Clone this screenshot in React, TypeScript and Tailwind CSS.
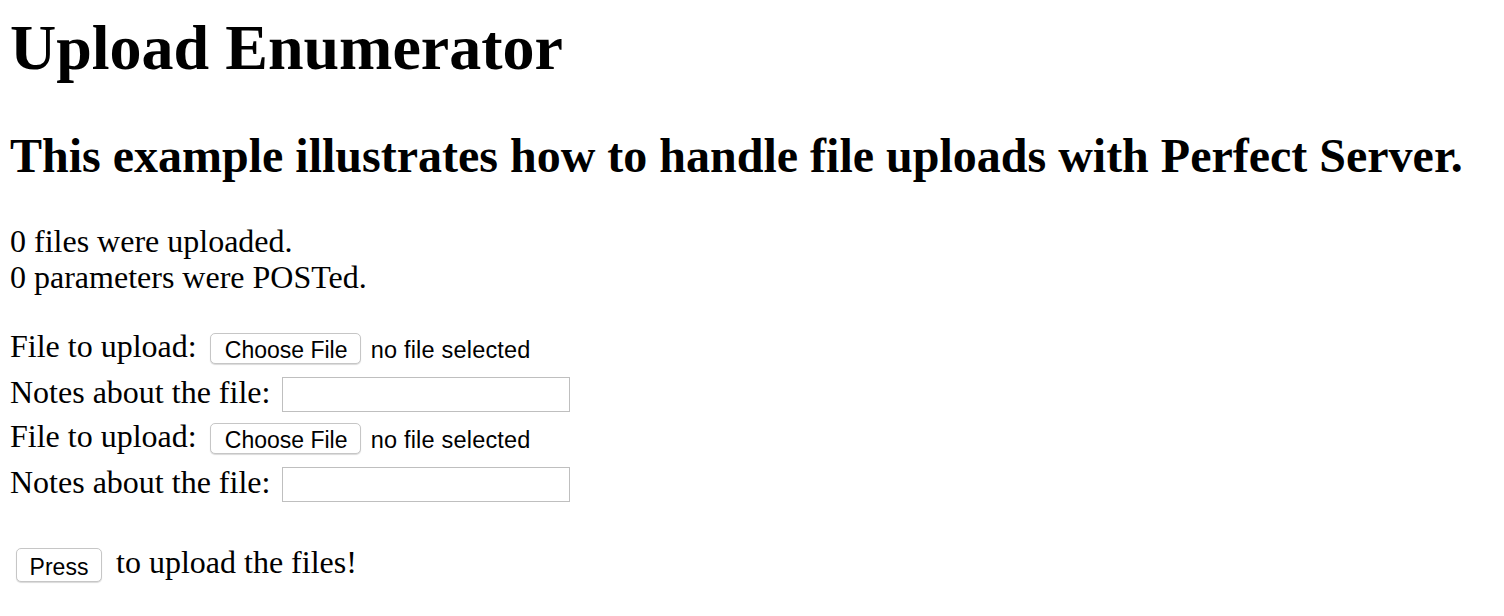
const FileRow = () => (
  <div className="flex items-start h-[46px]">
    <span className="leading-[36px]">File to upload:</span>
    <div className="flex items-center mt-[5px] ml-[13px] font-['Liberation_Sans','Helvetica',sans-serif]">
      <button
        type="button"
        className="flex items-center justify-center w-[151px] h-[31px] pt-[3px] pl-[2px] leading-[28px] text-[23px] rounded-[5px] border border-[#c6c6c6] bg-white shadow-[0_1px_1px_rgba(0,0,0,0.15)] text-black"
      >
        Choose File
      </button>
      <span className="ml-[10px] pt-[3px] leading-[28px] text-[23.5px] tracking-[0.2px]">no file selected</span>
    </div>
  </div>
);

const NotesRow = ({ last }: { last?: boolean }) => (
  <div className={last ? "flex items-start h-[80px]" : "flex items-start h-[44px]"}>
    <span className="leading-[36px]">Notes about the file:</span>
    <input
      type="text"
      className="mt-[3px] ml-[12px] w-[288px] h-[35px] border border-[#bfbfbf] bg-white outline-none"
    />
  </div>
);

export default function App() {
  return (
    <div className="min-h-screen bg-white text-black pl-[10px] pt-[12px] font-['Liberation_Serif','Times_New_Roman',serif]">
      <h1 className="text-[64px] leading-[72px] font-bold">Upload Enumerator</h1>
      <h2 className="mt-[44px] text-[48px] leading-[56px] font-bold">
        This example illustrates how to handle file uploads with Perfect Server.
      </h2>
      <div className="mt-[39px] text-[32px] leading-[36px]">
        <p>0 files were uploaded.</p>
        <p>0 parameters were POSTed.</p>
      </div>
      <form className="mt-[33px] text-[32px]" onSubmit={(e) => e.preventDefault()}>
        <FileRow />
        <NotesRow />
        <FileRow />
        <NotesRow last />
        <div className="flex items-start">
          <button
            type="submit"
            className="flex items-center justify-center mt-[4px] ml-[6px] w-[86px] h-[34px] pt-[3px] leading-[30px] rounded-[5px] border border-[#c6c6c6] bg-white shadow-[0_1px_1px_rgba(0,0,0,0.15)] font-['Liberation_Sans','Helvetica',sans-serif] text-[23px] text-black"
          >
            Press
          </button>
          <span className="ml-[14px] leading-[36px]">to upload the files!</span>
        </div>
      </form>
    </div>
  );
}
